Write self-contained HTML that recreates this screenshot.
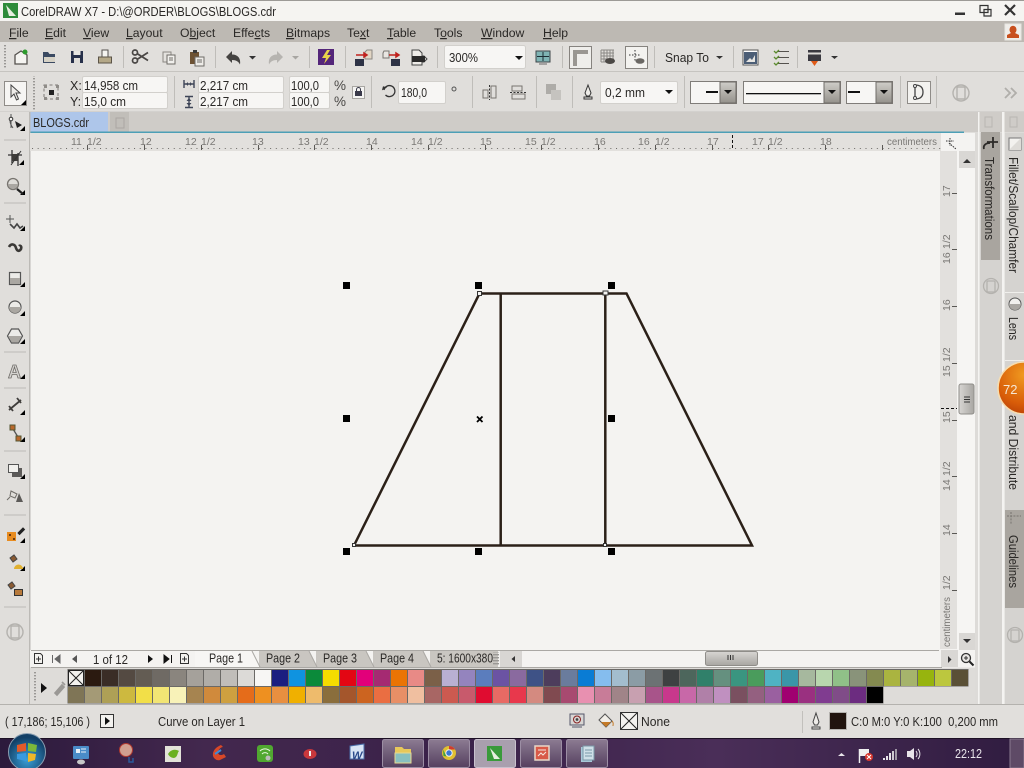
<!DOCTYPE html>
<html><head><meta charset="utf-8"><title>CorelDRAW X7</title>
<style>
html,body{margin:0;padding:0;width:1024px;height:768px;overflow:hidden;background:#e0dedb}
svg.main{position:absolute;left:0;top:0;filter:blur(.3px)}
text{font-family:"Liberation Sans",sans-serif;font-size:12.5px;fill:#2a2826}
.m{font-size:12.2px}
.r{font-size:10.5px;fill:#7a7875}
.pal{position:absolute;display:flex;height:16px;filter:blur(.3px)}
.pal i{display:block;width:16px;height:16px;margin-right:1px;flex:none}
#p1{left:68px;top:669.5px}#p2{left:68px;top:686.5px}
</style></head><body>
<svg class="main" width="1024" height="768" viewBox="0 0 1024 768">
<defs>
<pattern id="hm" x="32" y="148" width="5.67" height="2" patternUnits="userSpaceOnUse"><rect width="1" height="1" fill="#6a6865"/></pattern>
<pattern id="vm" x="954" y="151" width="2" height="5.67" patternUnits="userSpaceOnUse"><rect width="1" height="1" fill="#6a6865"/></pattern>
<pattern id="dots" x="0" y="0" width="2" height="3" patternUnits="userSpaceOnUse"><rect width="2" height="1.4" fill="#9a9895"/></pattern>
<linearGradient id="tb" x1="0" x2="1" y1="0" y2="0"><stop offset="0" stop-color="#2c1a3c"/><stop offset=".2" stop-color="#43284e"/><stop offset=".45" stop-color="#3a2149"/><stop offset=".7" stop-color="#4a2e58"/><stop offset="1" stop-color="#301c40"/></linearGradient>
<linearGradient id="btn" x1="0" x2="0" y1="0" y2="1"><stop offset="0" stop-color="#8c7b92"/><stop offset="1" stop-color="#55405f"/></linearGradient>
<radialGradient id="orb" cx=".5" cy=".7" r=".6"><stop offset="0" stop-color="#3ba0d8"/><stop offset="1" stop-color="#123f66"/></radialGradient>
<radialGradient id="org" cx=".5" cy=".25" r=".8"><stop offset="0" stop-color="#f09a20"/><stop offset=".7" stop-color="#d85c08"/><stop offset="1" stop-color="#b84006"/></radialGradient>
<linearGradient id="sb" x1="0" x2="0" y1="0" y2="1"><stop offset="0" stop-color="#d8d6d3"/><stop offset="1" stop-color="#a8a6a2"/></linearGradient>
<linearGradient id="sbv" x1="0" x2="1" y1="0" y2="0"><stop offset="0" stop-color="#d8d6d3"/><stop offset="1" stop-color="#a8a6a2"/></linearGradient>
<linearGradient id="dd" x1="0" x2="0" y1="0" y2="1"><stop offset="0" stop-color="#cfcdc8"/><stop offset="1" stop-color="#95928c"/></linearGradient>
</defs>

<!-- base bars -->
<rect width="1024" height="768" fill="#e0dedb"/>
<rect width="1024" height="21" fill="#f5f4f1"/><rect width="1024" height="1" fill="#9c9a96"/>
<rect y="21" width="1024" height="21" fill="#bdb9b3"/>
<rect y="42" width="1024" height="29" fill="#e1dfdc"/>
<rect y="71" width="1024" height="1" fill="#c6c4c0"/>
<rect y="72" width="1024" height="40" fill="#e0dedb"/>
<rect y="111.500" width="1024" height="1" fill="#c6c4c0"/>
<rect x="30" y="112" width="994" height="20" fill="#cfccc8"/>
<rect x="30" y="112" width="78" height="20" fill="#aec6ea"/>
<rect x="110" y="112" width="19" height="20" fill="#c1beb9"/>
<rect x="116" y="118" width="8" height="10" fill="none" stroke="#aaa7a3"/>
<rect x="30" y="131.500" width="934" height="1.500" fill="#4c9fb6"/>
<text x="33" y="127" textLength="56" lengthAdjust="spacingAndGlyphs">BLOGS.cdr</text>

<!-- canvas -->
<rect x="30" y="133" width="945" height="532" fill="#f4f3f1"/>
<rect x="29" y="112" width="1.500" height="592" fill="#bcbab6"/>

<!-- ruler H -->
<rect x="30" y="133" width="911" height="18" fill="#e2e0dd"/>
<rect x="30" y="148" width="911" height="1" fill="url(#hm)"/>
<g fill="#5a5855">
<rect x="87" y="145" width="1" height="5"/><rect x="144" y="145" width="1" height="5"/><rect x="201" y="145" width="1" height="5"/><rect x="258" y="145" width="1" height="5"/><rect x="314" y="145" width="1" height="5"/><rect x="371" y="145" width="1" height="5"/><rect x="428" y="145" width="1" height="5"/><rect x="485" y="145" width="1" height="5"/><rect x="541" y="145" width="1" height="5"/><rect x="598" y="145" width="1" height="5"/><rect x="655" y="145" width="1" height="5"/><rect x="712" y="145" width="1" height="5"/><rect x="768" y="145" width="1" height="5"/><rect x="825" y="145" width="1" height="5"/><rect x="882" y="145" width="1" height="5"/>
</g>
<line x1="732.500" y1="135" x2="732.500" y2="150" stroke="#111" stroke-dasharray="3 2"/>
<g>
<text class="r" x="71" y="145">11</text><text class="r" x="87" y="145">1/2</text>
<text class="r" x="140" y="145">12</text>
<text class="r" x="185" y="145">12</text><text class="r" x="201" y="145">1/2</text>
<text class="r" x="252" y="145">13</text>
<text class="r" x="298" y="145">13</text><text class="r" x="314" y="145">1/2</text>
<text class="r" x="366" y="145">14</text>
<text class="r" x="411" y="145">14</text><text class="r" x="428" y="145">1/2</text>
<text class="r" x="480" y="145">15</text>
<text class="r" x="525" y="145">15</text><text class="r" x="541" y="145">1/2</text>
<text class="r" x="594" y="145">16</text>
<text class="r" x="638" y="145">16</text><text class="r" x="655" y="145">1/2</text>
<text class="r" x="707" y="145">17</text>
<text class="r" x="752" y="145">17</text><text class="r" x="768" y="145">1/2</text>
<text class="r" x="820" y="145">18</text>
<text class="r" x="887" y="145" textLength="50" lengthAdjust="spacingAndGlyphs">centimeters</text>
</g>
<g fill="none" stroke="#333" stroke-width="1" stroke-dasharray="1.500 1"><path d="M946 141h8M950 138v8M949 143l7 6"/></g>

<!-- ruler V -->
<rect x="940" y="151" width="17" height="498" fill="#e2e0dd"/>
<rect x="955" y="151" width="1" height="498" fill="url(#vm)"/>
<g fill="#5a5855">
<rect x="952" y="193" width="5" height="1"/><rect x="952" y="249" width="5" height="1"/><rect x="952" y="306" width="5" height="1"/><rect x="952" y="363" width="5" height="1"/><rect x="952" y="420" width="5" height="1"/><rect x="952" y="476" width="5" height="1"/><rect x="952" y="533" width="5" height="1"/><rect x="952" y="590" width="5" height="1"/>
</g>
<line x1="941" y1="408.500" x2="957" y2="408.500" stroke="#111" stroke-dasharray="3 2"/>
<g>
<text class="r" transform="translate(950,197) rotate(-90)">17</text>
<text class="r" transform="translate(950,264) rotate(-90)">16</text><text class="r" transform="translate(950,249) rotate(-90)">1/2</text>
<text class="r" transform="translate(950,311) rotate(-90)">16</text>
<text class="r" transform="translate(950,377) rotate(-90)">15</text><text class="r" transform="translate(950,362) rotate(-90)">1/2</text>
<text class="r" transform="translate(950,423) rotate(-90)">15</text>
<text class="r" transform="translate(950,491) rotate(-90)">14</text><text class="r" transform="translate(950,476) rotate(-90)">1/2</text>
<text class="r" transform="translate(950,536) rotate(-90)">14</text>
<text class="r" transform="translate(950,590) rotate(-90)">1/2</text>
<text class="r" transform="translate(950,647) rotate(-90)" textLength="50" lengthAdjust="spacingAndGlyphs">centimeters</text>
</g>

<!-- V scrollbar -->
<rect x="957" y="151" width="18" height="499" fill="#f6f5f3"/>
<rect x="959" y="151" width="16" height="17" fill="#d9d7d4"/>
<path d="M963 163l4-4 4 4z" fill="#333"/>
<rect x="959" y="384" width="15" height="30" rx="2" fill="url(#sbv)" stroke="#8f8d89"/>
<path d="M964 397h6M964 399.500h6M964 402h6" stroke="#333"/>
<rect x="959" y="633" width="16" height="17" fill="#d9d7d4"/>
<path d="M963 639l4 4 4-4z" fill="#333"/>

<!-- artwork -->
<g fill="none" stroke="#2b2018" stroke-width="2.500">
<path d="M354 545.500L479.500 293.500H626.500L752 545.500Z"/>
<path d="M500.700 293.500V545.500M605.300 293.500V545.500"/>
</g>
<g fill="#f4f3f1" stroke="#333" stroke-width="1">
<rect x="477.500" y="291.500" width="4" height="4"/><rect x="603" y="291" width="5" height="4"/><rect x="352.500" y="543.500" width="3" height="3"/><rect x="603.500" y="543.500" width="3" height="3"/>
</g>
<g fill="#000">
<rect x="343" y="282" width="7" height="7"/><rect x="475" y="282" width="7" height="7"/><rect x="608" y="282" width="7" height="7"/>
<rect x="343" y="415" width="7" height="7"/><rect x="608" y="415" width="7" height="7"/>
<rect x="343" y="548" width="7" height="7"/><rect x="475" y="548" width="7" height="7"/><rect x="608" y="548" width="7" height="7"/>
</g>
<path d="M477 416.500l5.500 5.500M482.500 416.500l-5.500 5.500" stroke="#000" stroke-width="1.800"/>

<!-- title -->
<rect x="3" y="3" width="15" height="15" fill="#2e8b3a"/><path d="M6 5l10 11H9z" fill="#e7efe0"/>
<text x="21" y="16" style="font-size:12.500px" textLength="255" lengthAdjust="spacingAndGlyphs">CorelDRAW X7 - D:\@ORDER\BLOGS\BLOGS.cdr</text>
<rect x="955" y="12.500" width="10" height="2.500" fill="#333"/>
<path d="M980 5.500h8v7h-8zM984 9.500h7v6.500h-7z" fill="#f5f4f1" stroke="#333" stroke-width="1.200"/>
<path d="M1005 5l10 10M1015 5l-10 10" stroke="#333" stroke-width="2.200"/>

<!-- menu -->
<g>
<text class="m" x="9" y="37"><tspan text-decoration="underline">F</tspan>ile</text>
<text class="m" x="45" y="37"><tspan text-decoration="underline">E</tspan>dit</text>
<text class="m" x="83" y="37"><tspan text-decoration="underline">V</tspan>iew</text>
<text class="m" x="126" y="37"><tspan text-decoration="underline">L</tspan>ayout</text>
<text class="m" x="180" y="37">O<tspan text-decoration="underline">b</tspan>ject</text>
<text class="m" x="233" y="37">Effe<tspan text-decoration="underline">c</tspan>ts</text>
<text class="m" x="286" y="37"><tspan text-decoration="underline">B</tspan>itmaps</text>
<text class="m" x="347" y="37">Te<tspan text-decoration="underline">x</tspan>t</text>
<text class="m" x="387" y="37"><tspan text-decoration="underline">T</tspan>able</text>
<text class="m" x="434" y="37">T<tspan text-decoration="underline">o</tspan>ols</text>
<text class="m" x="481" y="37"><tspan text-decoration="underline">W</tspan>indow</text>
<text class="m" x="543" y="37"><tspan text-decoration="underline">H</tspan>elp</text>
</g>
<rect x="1005" y="24" width="16" height="16" fill="#f0eeea" stroke="#e8e6e2"/>
<path d="M1007 38v-3l4-2a3.500 4 0 1 1 4 0l4 2v3z" fill="#c8501e"/>

<!-- toolbar -->
<rect x="4" y="45" width="2" height="24" fill="url(#dots)"/>
<g stroke="#bfbdb9"><path d="M123.500 46v22M215.500 46v22M309.500 46v22M345.500 46v22M437.500 46v22M562.500 46v22M654.500 46v22M733.500 46v22M797.500 46v22"/></g>
<path d="M15 55l6-4 6 4v9H15z" fill="#f5f4f1" stroke="#55524e" stroke-width="1.300"/><circle cx="25" cy="52" r="2.500" fill="#2d9b2d"/>
<path d="M43 52h5l1.500 2H55v9H43z" fill="#3b4a62"/><path d="M44 57h11v5H44z" fill="#d6d2c6"/>
<rect x="71" y="51" width="12" height="12" fill="#27304a"/><rect x="73.500" y="51" width="7" height="4" fill="#e8e6e2"/><rect x="74" y="58" width="6" height="5" fill="#dfddd9"/>
<path d="M102 50h6v7h-6z" fill="#f5f4f1" stroke="#55524e"/><rect x="98.500" y="57" width="13" height="6" fill="#b4a888" stroke="#5c5448"/>
<g fill="none" stroke="#4a4745" stroke-width="1.700"><circle cx="135" cy="52.500" r="2.500"/><circle cx="135" cy="60.500" r="2.500"/><path d="M137 53.500l11 7M137 59.500l11-7"/></g>
<path d="M163 52h8v10h-8z" fill="#e4e2de" stroke="#8a8782"/><path d="M167 55h8v9h-8z" fill="#f1f0ed" stroke="#6f6c68"/><path d="M169 58h4M169 60h4" stroke="#6f6c68"/>
<path d="M190 52h9v12h-9z" fill="#6d5233"/><rect x="193" y="50" width="4" height="3" fill="#3a3a3a"/><path d="M195 57h9v9h-9z" fill="#eeece8" stroke="#6f6c68"/><path d="M197 60h5M197 62h5" stroke="#6f6c68"/>
<path d="M226 57l6-6v3.500c6 0 9 4 8 10-1.500-3-4-4.500-8-4.500v3z" fill="#454341"/>
<path d="M249 56h7l-3.500 3.500z" fill="#333"/>
<path d="M283 57l-6-6v3.500c-6 0-9 4-8 10 1.500-3 4-4.500 8-4.500v3z" fill="#b6b4b0"/>
<path d="M292 56h7l-3.500 3.500z" fill="#a8a6a2"/>
<rect x="318" y="49" width="16" height="16" fill="#54267a"/><path d="M327 50l-5 8h4l-2 6 7-9h-4l3-5z" fill="#e8d44a"/>
<rect x="355" y="59" width="9" height="7" fill="#2e3346"/><path d="M367 50h5v9h-7v-7z" fill="#e2d6c4" stroke="#8a8782"/><path d="M356 55h8M364 53l3 2-3 2z" stroke="#c0201c" fill="#c0201c" stroke-width="1.500"/>
<rect x="391" y="59" width="9" height="7" fill="#2e3346"/><path d="M384 51h5v7h-6v-5z" fill="#e8e6e2" stroke="#77746f"/><path d="M389 55h7M396 53l3 2-3 2z" stroke="#c0201c" fill="#c0201c" stroke-width="1.500"/>
<path d="M412 50h7l3 3v3h2l3 3-3 3h-2v3h-10z" fill="#eeece8" stroke="#444"/><rect x="412" y="56" width="13" height="6" fill="#2a2a2a"/>

<rect x="444.500" y="45.500" width="81" height="23" rx="2" fill="#f7f6f4" stroke="#d2d0cc"/>
<text x="449" y="62" textLength="29" lengthAdjust="spacingAndGlyphs">300%</text>
<path d="M515 56h8l-4 4z" fill="#111"/>
<rect x="536" y="51" width="14" height="11" fill="#7fb4b4" stroke="#3d4548"/><path d="M543 52v9M537 56.500h12" stroke="#1d2e34"/><path d="M539 64h8" stroke="#666"/>
<rect x="569.500" y="46.500" width="22" height="22" fill="#efeeeb" stroke="#86837f"/><path d="M573 50h15v4h-11v12h-4z" fill="#9a9792"/>
<g stroke="#8b8885"><path d="M601 50v12M604 50v12M607 50v12M610 50v12M613 50v9M601 50h13M601 53h13M601 56h13M601 59h13M601 62h8"/></g><ellipse cx="610" cy="61" rx="5" ry="3" fill="#4b4845"/>
<rect x="625.500" y="46.500" width="22" height="22" fill="#f3f2ef" stroke="#86837f"/><path d="M629 55h12M635 50v12" stroke="#333" stroke-dasharray="1.500 1.500"/><ellipse cx="640" cy="61" rx="4.500" ry="2.800" fill="#6a6763"/>
<text x="665" y="62" textLength="44" lengthAdjust="spacingAndGlyphs">Snap To</text>
<path d="M716 56h7l-3.500 3z" fill="#333"/>
<rect x="743" y="50" width="15" height="15" fill="#fff" stroke="#555"/><rect x="744" y="52" width="13" height="12" fill="#4c5e76"/><path d="M746 62l4-4 2 2 3-5v7z" fill="#e8e6e2"/>
<g stroke="#55524e"><path d="M778 51.500h11M778 57.500h11M778 63.500h11"/></g><g stroke="#5b8b2d" fill="none" stroke-width="1.300"><path d="M774 51l2 2 3-3M774 57l2 2 3-3M774 63l2 2 3-3"/></g>
<rect x="808" y="50" width="13" height="11" fill="#3a3940"/><rect x="808" y="52.500" width="13" height="2" fill="#dedcd8"/><path d="M811 61h7l-3.500 5z" fill="#e05a18"/>
<path d="M831 56h7l-3.500 3z" fill="#333"/>

<!-- property bar -->
<rect x="33" y="76" width="2" height="34" fill="url(#dots)"/>
<rect x="2" y="77" width="26" height="1" fill="url(#dots)" opacity=".9"/>
<g stroke="#bfbdb9"><path d="M174.500 76v32M371.500 76v32M472.500 76v32M536.500 76v32M572.500 76v32M684.500 76v32M900.500 76v32M936.500 76v32"/></g>
<rect x="44" y="85" width="14" height="14" fill="none" stroke="#7e7b77" stroke-dasharray="3 2.500"/><rect x="49" y="90" width="5" height="5" fill="#222"/>
<rect x="44" y="85" width="3" height="3" fill="#8f8c88"/><rect x="56" y="85" width="3" height="3" fill="#8f8c88"/><rect x="44" y="97" width="3" height="3" fill="#8f8c88"/><rect x="56" y="97" width="3" height="3" fill="#8f8c88"/>
<text x="70" y="90">X:</text><text x="70" y="106">Y:</text>
<g fill="#f7f6f4" stroke="#d2d0cc">
<rect x="82.500" y="76.500" width="85" height="16" rx="1.500"/><rect x="82.500" y="92.500" width="85" height="16" rx="1.500"/>
<rect x="198.500" y="76.500" width="85" height="16" rx="1.500"/><rect x="198.500" y="92.500" width="85" height="16" rx="1.500"/>
<rect x="289.500" y="76.500" width="40" height="16" rx="1.500"/><rect x="289.500" y="92.500" width="40" height="16" rx="1.500"/>
<rect x="398.500" y="81.500" width="47" height="22" rx="1.500"/>
<rect x="600.500" y="81.500" width="77" height="22" rx="1.500"/>
</g>
<text x="84" y="90" textLength="54" lengthAdjust="spacingAndGlyphs">14,958 cm</text><text x="84" y="106" textLength="42" lengthAdjust="spacingAndGlyphs">15,0 cm</text>
<text x="200" y="90" textLength="48" lengthAdjust="spacingAndGlyphs">2,217 cm</text><text x="200" y="106" textLength="48" lengthAdjust="spacingAndGlyphs">2,217 cm</text>
<text x="291" y="90" textLength="28" lengthAdjust="spacingAndGlyphs">100,0</text><text x="291" y="106" textLength="28" lengthAdjust="spacingAndGlyphs">100,0</text>
<text x="334" y="90" style="fill:#4a4846;font-size:13.500px">%</text><text x="334" y="106" style="fill:#4a4846;font-size:13.500px">%</text>
<path d="M184 80v8M194 80v8M184 84h10" stroke="#3e4557" stroke-width="1.400" fill="none"/>
<path d="M186 84l2-2v4zM192 84l-2-2v4z" fill="#3e4557"/>
<path d="M185 96.500h8M185 107.500h8M189 97v10" stroke="#3e4557" stroke-width="1.400"/><path d="M189 98l-2.500 3h5zM189 106l-2.500-3h5z" fill="#3e4557"/>
<rect x="352.500" y="86.500" width="12" height="12" fill="#f5f4f2" stroke="#a8a6a2"/><rect x="355" y="91" width="7" height="5" fill="#3a3a4a"/><path d="M356.500 91v-1.500a2 2 0 0 1 4 0V91" stroke="#3a3a4a" fill="none"/>
<path d="M384 90a5.500 5.500 0 1 1 1.500 5" fill="none" stroke="#333" stroke-width="1.300"/><path d="M381 89h6l-3-3z" fill="#333" transform="rotate(-30 384 88)"/>
<text x="401" y="97" textLength="26" lengthAdjust="spacingAndGlyphs">180,0</text>
<circle cx="454" cy="89" r="2" fill="none" stroke="#555"/>
<g fill="none" stroke="#77746f"><path d="M483 90h5v8h-5zM491 86h5v12h-5z"/></g><path d="M489.500 85v15" stroke="#333" stroke-dasharray="2 1.500"/>
<g fill="none" stroke="#77746f"><path d="M512 86h10v5h-10zM512 94h13v5h-13z"/></g><path d="M510 92.500h16" stroke="#333" stroke-dasharray="2 1.500"/>
<rect x="546" y="84" width="10" height="10" fill="#aeaca8"/><rect x="551" y="90" width="10" height="10" fill="#c5c3bf"/>
<path d="M584 99h8v-2h-8zM588 85l3 8-1.500 3h-3l-1.500-3z" fill="#eeece8" stroke="#333"/>
<text x="605" y="97" textLength="40" lengthAdjust="spacingAndGlyphs">0,2 mm</text><path d="M665 90h8l-4 4z" fill="#111"/>
<rect x="690.500" y="81.500" width="46" height="22" fill="#f7f6f4" stroke="#807d79"/><rect x="720" y="82" width="16" height="21" fill="url(#dd)" stroke="#6f6c68"/><path d="M724 90h8l-4 4z" fill="#111"/><rect x="706" y="91" width="12" height="2" fill="#111"/>
<rect x="743.500" y="81.500" width="97" height="22" fill="#f7f6f4" stroke="#807d79"/><rect x="824" y="82" width="16" height="21" fill="url(#dd)" stroke="#6f6c68"/><path d="M828 90h8l-4 4z" fill="#111"/><rect x="746" y="93" width="75" height="1.300" fill="#111"/>
<rect x="846.500" y="81.500" width="46" height="22" fill="#f7f6f4" stroke="#807d79"/><rect x="876" y="82" width="16" height="21" fill="url(#dd)" stroke="#6f6c68"/><path d="M880 90h8l-4 4z" fill="#111"/><rect x="848" y="91" width="12" height="2" fill="#111"/>
<rect x="907.500" y="81.500" width="23" height="22" fill="#f3f2ef" stroke="#8f8c88"/><path d="M915 85c6 0 8 3 8 7s-2 7-8 7M915 85v14" fill="none" stroke="#444" stroke-width="1.300"/><circle cx="915" cy="86" r="1.500" fill="#fff" stroke="#444"/><circle cx="915" cy="98" r="1.500" fill="#fff" stroke="#444"/>
<circle cx="961" cy="93" r="8" fill="none" stroke="#b4b2ae" stroke-width="1.400"/><rect x="957" y="87" width="8" height="12" rx="1" fill="none" stroke="#b4b2ae" stroke-width="1.400"/>
<path d="M1005 88l5 5-5 5M1011 88l5 5-5 5" fill="none" stroke="#b0aeaa" stroke-width="1.800"/>

<!-- toolbox -->
<rect x="0" y="112" width="29" height="592" fill="#e0dedb"/>
<rect x="4.500" y="81.500" width="22" height="24" fill="#f6f5f3" stroke="#8f8c88"/>
<path d="M11 85l9 8h-4l2.500 6-2 1-2.500-6-3 3z" fill="#eeece9" stroke="#444"/>
<path d="M26 100v5h-5z" fill="#000"/>
<g fill="#000">
<path d="M25 126v5h-5zM24 160v5h-5zM25 190v5h-5zM25 226v5h-5zM25 282v5h-5zM25 311v5h-5zM25 339v5h-5zM25 374v5h-5zM25 410v5h-5zM25 437v5h-5zM25 474v5h-5zM25 538v5h-5zM25 566v5h-5z"/>
</g>
<g stroke="#bdbbb7"><path d="M4 140h22M4 203h22M4 352h22M4 388h22M4 451h22M4 515h22M4 607h22"/></g>
<path d="M11 114v14M11 118c-2 3-1 6 2 10" fill="none" stroke="#555"/><path d="M15 121l7 4-5 3z" fill="#222"/><circle cx="11" cy="119" r="1.800" fill="#f4f3f1" stroke="#333"/>
<path d="M8 155h14M12 150v13M18 153v13" stroke="#333" stroke-width="1.300"/><rect x="12" y="154" width="6" height="7" fill="#3d3b39"/><path d="M11 165l10-14" stroke="#333"/>
<circle cx="13" cy="184" r="5.500" fill="#dedcd8" stroke="#77746f" stroke-width="1.300"/><path d="M8 184h10a5 5 0 0 1-10 0z" fill="#aaa7a2"/><path d="M17 189l6 5" stroke="#222" stroke-width="2.200"/>
<path d="M10 215v8M6 219h8" stroke="#555"/><path d="M10 224l4 4 3-4 3 4 3-2" fill="none" stroke="#444" stroke-width="1.600"/>
<path d="M9 247c2-4 6-3 7 1 1 3 3 4 5 1 1-3-1-4-2-3" fill="none" stroke="#3a3836" stroke-width="2.600"/>
<rect x="9.500" y="272.500" width="11" height="12" fill="#ecebe8" stroke="#555" stroke-width="1.200"/><rect x="10" y="278" width="10" height="6" fill="#aaa7a2"/>
<circle cx="15" cy="307" r="6" fill="#ecebe8" stroke="#555" stroke-width="1.200"/><path d="M9 307h12a6 6 0 0 1-12 0z" fill="#aaa7a2"/>
<path d="M11.500 329h7l4 7-4 7h-7l-4-7z" fill="#ecebe8" stroke="#555" stroke-width="1.200"/><path d="M8 336h14l-4 6.500h-6z" fill="#aaa7a2"/>
<text x="8" y="378" style="font-size:18px;font-weight:bold;fill:#d5d3d0;stroke:#6f6c68;stroke-width:.8">A</text>
<path d="M9 410l12-10M9 406l4 5M17 398l4 5" stroke="#3f3d3b" stroke-width="1.800" fill="none"/>
<path d="M13 429l5 8" stroke="#555" stroke-width="1.300"/><rect x="10" y="425" width="5" height="5" fill="#b8682c" stroke="#553"/><rect x="16" y="436" width="5" height="5" fill="#b8682c" stroke="#553"/>
<rect x="12" y="468" width="10" height="9" fill="#5c5a58"/><rect x="8.500" y="464.500" width="10" height="8" fill="#f1f0ed" stroke="#555"/>
<path d="M11 491l6 3-2 4-5-2zM10 497l-3 3" stroke="#6f6c68" fill="#dfddd9"/><path d="M19 493l4 9h-7z" fill="#5c5a58"/>
<path d="M18 533l5-5 1.500 1.500-5 5z" fill="#222" stroke="#222"/><rect x="7" y="532" width="9" height="9" fill="#e88c20"/><rect x="9" y="534" width="2" height="2" fill="#6a3a10"/><rect x="13" y="538" width="2" height="2" fill="#6a3a10"/>
<path d="M10 558l4-3 3 4-4 3z" fill="#8a5a32" stroke="#444"/><path d="M14 569a4.500 4.500 0 0 1 9 0z" fill="#e0b030"/>
<path d="M8 585l4-3 3 4-4 3z" fill="#8a5a32" stroke="#444"/><rect x="14.500" y="589.500" width="8" height="6" fill="#b87a3c" stroke="#333"/>
<circle cx="15" cy="632" r="8" fill="none" stroke="#b4b2ae" stroke-width="1.400"/><rect x="11" y="626" width="8" height="12" rx="1" fill="none" stroke="#b4b2ae" stroke-width="1.400"/>

<!-- right docker -->
<rect x="975" y="112" width="49" height="592" fill="#dddbd8"/>
<rect x="965" y="112" width="59" height="20" fill="#cfccc8"/>
<rect x="978" y="112" width="1.500" height="592" fill="#f4f3f1"/>
<rect x="980" y="133" width="22" height="571" fill="#d5d3d0"/>
<rect x="1002" y="112" width="2.500" height="592" fill="#f4f3f1"/>
<rect x="1005" y="133" width="19" height="571" fill="#d5d3d0"/>
<rect x="981" y="132" width="19" height="128" fill="#a9a59f"/>
<rect x="1005" y="510" width="19" height="98" fill="#a9a59f"/>
<rect x="1005" y="292" width="19" height="1" fill="#f0efec"/>
<rect x="1005" y="360" width="19" height="1" fill="#f0efec"/>
<rect x="985" y="117" width="7" height="10" fill="none" stroke="#b8b6b2"/>
<rect x="1010" y="117" width="7" height="10" fill="none" stroke="#b8b6b2"/>
<path d="M984 149c-1-3 1-6 6-6M993 137v11M987 142h11" fill="none" stroke="#2c2a28" stroke-width="1.800"/>
<path d="M1009 138h12v12h-12z" fill="#f3f2ef" stroke="#777"/><path d="M1009 150l12-12v12z" fill="#dedcd8"/>
<text transform="translate(985,157) rotate(90)" textLength="83" lengthAdjust="spacingAndGlyphs">Transformations</text>
<text transform="translate(1009,157) rotate(90)" textLength="116" lengthAdjust="spacingAndGlyphs">Fillet/Scallop/Chamfer</text>
<circle cx="1015" cy="304" r="6" fill="#f1f0ed" stroke="#555"/><path d="M1009 304h12a6 6 0 0 1-12 0z" fill="#aaa7a2"/>
<text transform="translate(1009,317) rotate(90)" textLength="23" lengthAdjust="spacingAndGlyphs">Lens</text>
<text transform="translate(1009,415) rotate(90)" textLength="75" lengthAdjust="spacingAndGlyphs">and Distribute</text>
<path d="M1007 516h14M1011 512v12" stroke="#77746f" stroke-dasharray="2 1.200"/>
<text transform="translate(1009,535) rotate(90)" textLength="53" lengthAdjust="spacingAndGlyphs">Guidelines</text>
<circle cx="991" cy="286" r="7.500" fill="none" stroke="#b4b2ae" stroke-width="1.300"/><rect x="987" y="281" width="8" height="11" rx="1" fill="none" stroke="#b4b2ae" stroke-width="1.300"/>
<circle cx="1015" cy="635" r="7.500" fill="none" stroke="#b4b2ae" stroke-width="1.300"/><rect x="1011" y="630" width="8" height="11" rx="1" fill="none" stroke="#b4b2ae" stroke-width="1.300"/>
<circle cx="1024" cy="388" r="26" fill="url(#org)" stroke="#f6ddb0" stroke-width="1.600"/>
<text x="1003" y="394" style="font-size:13px;fill:#f6e7d4">72</text>

<!-- page tabs -->
<rect x="30" y="650" width="945" height="17.500" fill="#f4f3f1"/>
<rect x="31" y="650" width="908" height="1" fill="#aaa8a4"/>
<rect x="31" y="667" width="911" height="1" fill="#aaa8a4"/>
<rect x="500" y="651" width="22" height="16" fill="#d8d6d3"/>
<path d="M195 651h57l8 16h-65z" fill="#f7f6f4"/>
<path d="M259 651h50l8 16h-58z" fill="#c9c6c1"/><path d="M316 651h50l8 16h-58z" fill="#c9c6c1"/><path d="M373 651h50l8 16h-58z" fill="#c9c6c1"/><rect x="430" y="651" width="68" height="16" fill="#c9c6c1"/>
<path d="M252 651l8 16M309 651l8 16M366 651l8 16M423 651l8 16" stroke="#aaa8a4" fill="none"/>
<rect x="493" y="652" width="6" height="14" fill="url(#dots)"/>
<text x="209" y="662.500" style="font-size:12.500px" textLength="34" lengthAdjust="spacingAndGlyphs">Page 1</text>
<text x="266" y="662.500" style="font-size:12.500px" textLength="34" lengthAdjust="spacingAndGlyphs">Page 2</text>
<text x="323" y="662.500" style="font-size:12.500px" textLength="34" lengthAdjust="spacingAndGlyphs">Page 3</text>
<text x="380" y="662.500" style="font-size:12.500px" textLength="34" lengthAdjust="spacingAndGlyphs">Page 4</text>
<text x="437" y="662.500" style="font-size:12.500px" textLength="56" lengthAdjust="spacingAndGlyphs">5: 1600x380</text>
<path d="M34.500 653.500h6l2 2v8h-8zM36 659h5M38.500 656.500v5" fill="#f3f2ef" stroke="#333"/>
<path d="M180.500 653.500h6l2 2v8h-8zM182 659h5M184.500 656.500v5" fill="#f3f2ef" stroke="#333"/>
<path d="M60 655v8l-5-4zM52.500 655v8" fill="#666" stroke="#666"/>
<path d="M77 655v8l-5-4z" fill="#555"/>
<path d="M148 655v8l5-4z" fill="#111"/>
<path d="M164 655v8l5-4zM171.500 655v8" fill="#111" stroke="#111"/>
<text x="93" y="664" textLength="35" lengthAdjust="spacingAndGlyphs">1 of 12</text>
<path d="M515 656v6l-3.500-3z" fill="#333"/>
<rect x="705.500" y="651.500" width="52" height="14" rx="2" fill="url(#sb)" stroke="#8f8d89"/>
<path d="M728 655v5M730.500 655v5M733 655v5" stroke="#333"/>
<rect x="941" y="650" width="17" height="17" fill="#d9d7d4"/>
<path d="M948 656v7l3.500-3.500z" fill="#333"/>
<circle cx="966" cy="658" r="4.500" fill="#e8e6e3" stroke="#333" stroke-width="1.300"/><path d="M964 658h4M966 656v4" stroke="#333"/><path d="M969.500 661.500l4 4" stroke="#222" stroke-width="2"/>

<!-- palette zone -->
<rect x="30" y="668" width="945" height="36" fill="#dedcd9"/>
<rect x="67.500" y="669" width="901" height="17.500" fill="#6b6966"/>
<rect x="67.500" y="686" width="816" height="17.500" fill="#6b6966"/>
<rect x="34" y="671" width="2" height="31" fill="url(#dots)"/>
<path d="M41 683v10l6-5z" fill="#111"/>
<path d="M55 693l7-8 2 2-7 8zM62 682l3 3" stroke="#9a9895" stroke-width="1.700" fill="#9a9895"/>

<!-- status -->
<rect x="0" y="704" width="1024" height="1" fill="#b4b2ae"/>
<rect x="0" y="705" width="1024" height="33" fill="#e1dfdc"/>
<text x="5" y="726" textLength="85" lengthAdjust="spacingAndGlyphs">( 17,186; 15,106 )</text>
<rect x="100.500" y="714.500" width="13" height="13" fill="#f3f2ef" stroke="#333"/><path d="M105 717v8l5-4z" fill="#111"/>
<text x="158" y="726" textLength="87" lengthAdjust="spacingAndGlyphs">Curve on Layer 1</text>
<rect x="570" y="714" width="14" height="11" fill="#d8d6d4" stroke="#55576a"/><circle cx="577" cy="719.500" r="3.500" fill="none" stroke="#822"/><circle cx="577" cy="719.500" r="1.400" fill="#444"/><path d="M572 727h10" stroke="#55576a"/>
<path d="M599 720l6-6 7 7-6 6z" fill="#f1eee8" stroke="#555"/><path d="M601 722h10l-5 5z" fill="#c47a28"/><path d="M612 721c2 2 1 3 1 5" stroke="#c47a28" fill="none"/>
<rect x="620.500" y="712.500" width="17" height="17" fill="#f3f2ef" stroke="#333"/><path d="M621 713l16 16M637 713l-16 16" stroke="#222"/>
<text x="641" y="726" textLength="29" lengthAdjust="spacingAndGlyphs">None</text>
<rect x="802" y="711" width="1" height="22" fill="#c2c0bc"/>
<path d="M812 727h8v2h-8zM816 713l3 9-1.500 3h-3l-1.500-3z" fill="#eeece8" stroke="#444"/>
<rect x="829.500" y="712.500" width="17" height="17" fill="#21140e" stroke="#b4b2ae"/>
<text x="851" y="726" textLength="147" lengthAdjust="spacingAndGlyphs" xml:space="preserve">C:0 M:0 Y:0 K:100  0,200 mm</text>

<!-- taskbar -->
<rect y="738" width="1024" height="30" fill="url(#tb)"/>
<rect y="738" width="1024" height="1" fill="#1c1024"/>
<rect x="382.500" y="739.500" width="41" height="28" rx="2" fill="url(#btn)" stroke="#9c8ea4"/>
<rect x="428.500" y="739.500" width="41" height="28" rx="2" fill="url(#btn)" stroke="#9c8ea4"/>
<rect x="474.500" y="739.500" width="41" height="28" rx="2" fill="#a99fae" stroke="#c9c1ce"/>
<rect x="520.500" y="739.500" width="41" height="28" rx="2" fill="url(#btn)" stroke="#9c8ea4"/>
<rect x="566.500" y="739.500" width="41" height="28" rx="2" fill="url(#btn)" stroke="#9c8ea4"/>
<rect x="1010" y="739" width="14" height="29" fill="#5e4a66" stroke="#8a7a90"/>
<circle cx="27" cy="752" r="18.500" fill="url(#orb)" stroke="#8a9fb2"/>
<path d="M17 745l9-2v8l-9 1z" fill="#e25a2a"/><path d="M28 743l9 2-1 7-8-1z" fill="#7cb83a"/><path d="M17 754l9-1v8l-9-2z" fill="#3a9ae0"/><path d="M28 753l8 1-1 6-7 2z" fill="#f0b828"/>
<rect x="73" y="746" width="16" height="13" rx="1" fill="#4a8cc8"/><rect x="76" y="749" width="4" height="4" fill="#e8f0f8"/><path d="M81 749h5M81 752h5" stroke="#e8f0f8"/><ellipse cx="81" cy="762" rx="4" ry="2.500" fill="#c8c8c8"/>
<circle cx="126" cy="750" r="6.500" fill="#d0a090" stroke="#b03a30"/><path d="M129 757v5h4v-4" stroke="#2a5a9a" fill="none" stroke-width="1.500"/>
<rect x="165" y="746" width="16" height="16" fill="#e2e2d8"/><path d="M168 754c3-5 8-5 11-3-2 2-1 6-5 7-3 0-5-2-6-4z" fill="#6ab020"/>
<path d="M221 745c-5 2-9 6-8 11 1 3 4 5 7 4l6-3-2-3c-3 2-6 1-6-2 0-2 3-5 5-5z" fill="#d84828"/><path d="M215 754l6-4" stroke="#3a8ad8" stroke-width="2"/>
<rect x="257" y="745" width="16" height="17" rx="3" fill="#50a830"/><path d="M260 751a7 7 0 0 1 10 0M262 754a4 4 0 0 1 6 0" stroke="#e8f8e0" fill="none"/><circle cx="268" cy="758" r="2.500" fill="#bbb"/>
<ellipse cx="310" cy="754" rx="6.500" ry="5" fill="#c8383c"/><path d="M310 751v5" stroke="#eee" stroke-width="2"/>
<path d="M350 746l14-2v15h-14z" fill="#d8e4f4" stroke="#4a6ea8"/><text x="352" y="759" style="font-size:11px;font-weight:bold;font-style:italic;fill:#2a4a8a">W</text>
<path d="M395 747h7l2 2h7v5h-16z" fill="#e8c85a"/><rect x="395" y="753" width="16" height="10" fill="#88c0c0" stroke="#e8d890"/>
<circle cx="449" cy="753" r="7" fill="#e0c030"/><path d="M449 746a7 7 0 0 1 6 3.500h-6z" fill="#d03a30"/><path d="M443 749.500l3.500 7 -3-.5z" fill="#40a040"/><circle cx="449" cy="753" r="3.200" fill="#3a78d0" stroke="#eee"/>
<rect x="487" y="746" width="15" height="15" fill="#3a9a3a"/><path d="M490 748l10 11h-6z" fill="#e8efe0"/>
<rect x="535" y="746" width="14" height="14" fill="#d85a48" stroke="#e8d8c8" stroke-width="1.500"/><path d="M538 750h8M538 756l3-3 2 2 3-3" stroke="#f5e8e0" fill="none"/>
<path d="M581 747h11v15h-11z" fill="#a8c8d8"/><path d="M583 746h11v14h-11z" fill="#cfe0e8" stroke="#7a98a8"/><path d="M585 750h7M585 753h7M585 756h7" stroke="#7a98a8"/>
<path d="M838 756l3.500-3 3.500 3z" fill="#e8e4ea"/>
<path d="M859.500 749v14" stroke="#f0f0f0" stroke-width="1.500"/><path d="M860 749h9v7h-9z" fill="#f0f0f0"/><circle cx="869" cy="757" r="4" fill="#d83830"/><path d="M867 755l4 4M871 755l-4 4" stroke="#fff"/>
<g fill="#e8e4ea"><rect x="883" y="758" width="2" height="2"/><rect x="886" y="756" width="2" height="4"/><rect x="889" y="753" width="2" height="7"/><rect x="892" y="751" width="2" height="9" fill="#cfcad2"/><rect x="895" y="749" width="2" height="11" fill="#9e96a4"/></g>
<path d="M907 751h3l4-3v12l-4-3h-3z" fill="#e8e4ea"/><path d="M916 751c1.500 2 1.500 4 0 6M918 749c2.500 3 2.500 7 0 10" stroke="#e8e4ea" fill="none"/>
<text x="955" y="758" style="fill:#eae6ec" textLength="27" lengthAdjust="spacingAndGlyphs">22:12</text>
</svg>

<div class="pal" id="p1"><i style="background:#f3f2ef;position:relative;outline:1px solid #222;outline-offset:-1px"><svg width="16" height="16" style="display:block"><path d="M0 0l16 16M16 0L0 16" stroke="#222"/></svg></i><i style="background:#2b1a10"></i><i style="background:#3a2d26"></i><i style="background:#544a42"></i><i style="background:#635c53"></i><i style="background:#6f6a64"></i><i style="background:#8a857e"></i><i style="background:#a5a19b"></i><i style="background:#b0ada8"></i><i style="background:#c0bdb9"></i><i style="background:#dcdad7"></i><i style="background:#f7f6f4"></i><i style="background:#1b1e80"></i><i style="background:#0f93e0"></i><i style="background:#0b8a3a"></i><i style="background:#f5dc00"></i><i style="background:#e30613"></i><i style="background:#e2007a"></i><i style="background:#a52a72"></i><i style="background:#ea7404"></i><i style="background:#e88a86"></i><i style="background:#7b6048"></i><i style="background:#b9b0d2"></i><i style="background:#9484be"></i><i style="background:#5b7dbd"></i><i style="background:#6b53a3"></i><i style="background:#8a6a9f"></i><i style="background:#3e5286"></i><i style="background:#4d3d5c"></i><i style="background:#6a7c9d"></i><i style="background:#0a7cd4"></i><i style="background:#85bdee"></i><i style="background:#a3bdce"></i><i style="background:#8b9ca5"></i><i style="background:#6c7274"></i><i style="background:#3e4142"></i><i style="background:#4d665c"></i><i style="background:#30806a"></i><i style="background:#65907f"></i><i style="background:#3a9580"></i><i style="background:#4a9c5c"></i><i style="background:#4fb3c3"></i><i style="background:#3a96a8"></i><i style="background:#a6b89e"></i><i style="background:#b8d6ae"></i><i style="background:#90c088"></i><i style="background:#89937a"></i><i style="background:#848a50"></i><i style="background:#aab440"></i><i style="background:#a6b46c"></i><i style="background:#97b40e"></i><i style="background:#bcc73e"></i><i style="background:#5a5036"></i></div>
<div class="pal" id="p2"><i style="background:#7f7556"></i><i style="background:#a49a76"></i><i style="background:#aea056"></i><i style="background:#cdb93f"></i><i style="background:#f2df48"></i><i style="background:#f2e574"></i><i style="background:#f8f2b8"></i><i style="background:#a68450"></i><i style="background:#d08a3c"></i><i style="background:#cea040"></i><i style="background:#e56c1a"></i><i style="background:#ee9020"></i><i style="background:#e88f40"></i><i style="background:#f0b000"></i><i style="background:#eebb6c"></i><i style="background:#8a6e3c"></i><i style="background:#a4562c"></i><i style="background:#cc6420"></i><i style="background:#ea6e42"></i><i style="background:#e88f66"></i><i style="background:#f0bfa0"></i><i style="background:#a86664"></i><i style="background:#cc5a50"></i><i style="background:#c85a6c"></i><i style="background:#e00c30"></i><i style="background:#e86a64"></i><i style="background:#e8384c"></i><i style="background:#d48a80"></i><i style="background:#804a50"></i><i style="background:#a84a70"></i><i style="background:#e890b0"></i><i style="background:#c87c98"></i><i style="background:#a08488"></i><i style="background:#c8a0b0"></i><i style="background:#a8548a"></i><i style="background:#c8388c"></i><i style="background:#c868a8"></i><i style="background:#b080a8"></i><i style="background:#c090c0"></i><i style="background:#7a5060"></i><i style="background:#946080"></i><i style="background:#9a60a0"></i><i style="background:#a00070"></i><i style="background:#9a3080"></i><i style="background:#803c90"></i><i style="background:#804c88"></i><i style="background:#6c2c80"></i><i style="background:#000"></i></div>
</body></html>
